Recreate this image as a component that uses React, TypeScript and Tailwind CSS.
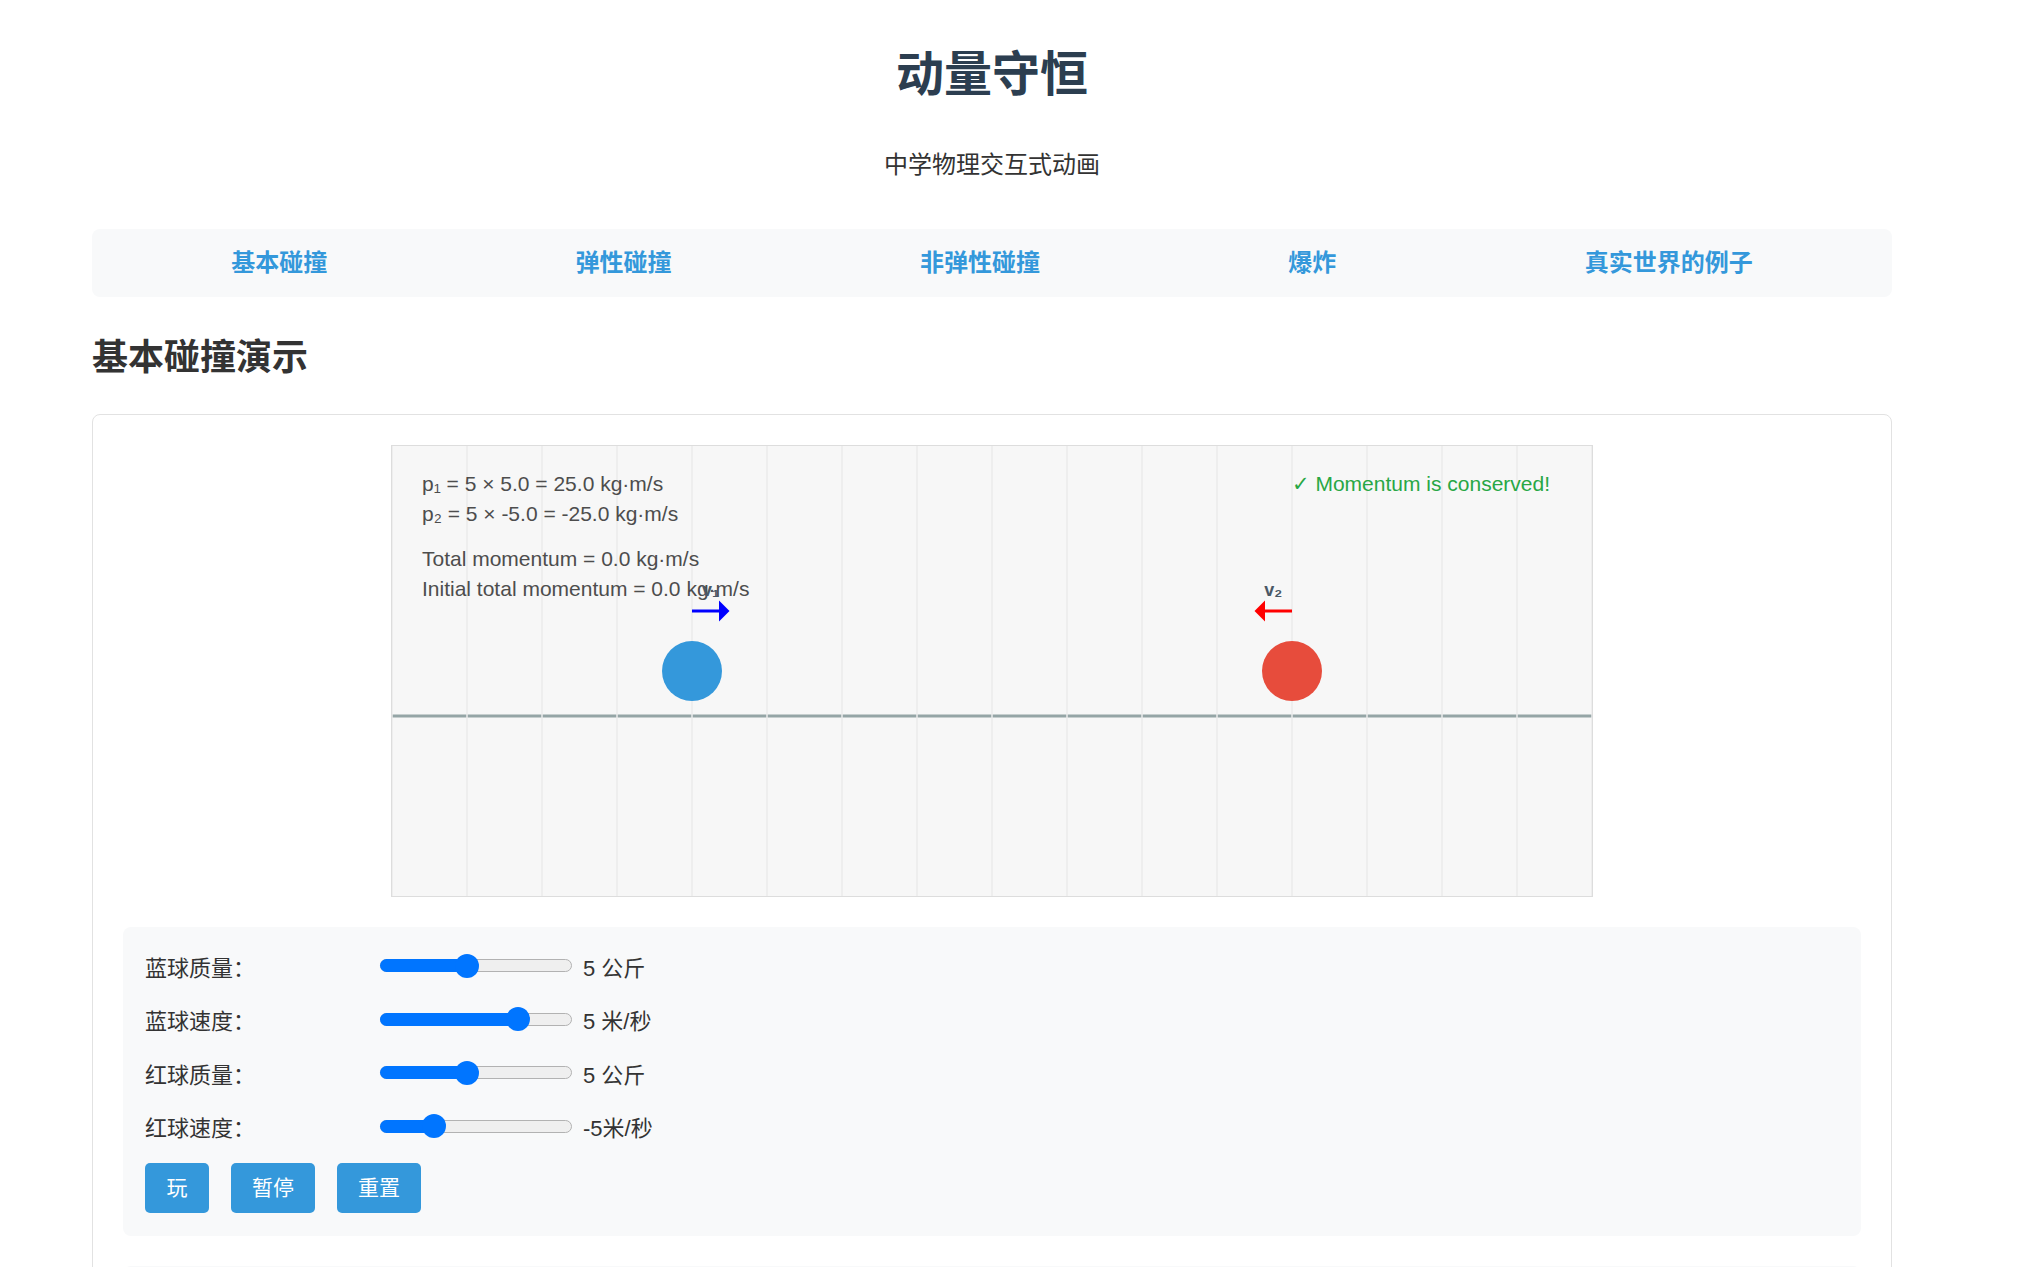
import React from 'react';

const navItems = ['基本碰撞', '弹性碰撞', '非弹性碰撞', '爆炸', '真实世界的例子'];

const controls = [
  { label: '蓝球质量：', frac: 4 / 9, value: '5 公斤' },
  { label: '蓝球速度：', frac: 0.75, value: '5 米/秒' },
  { label: '红球质量：', frac: 4 / 9, value: '5 公斤' },
  { label: '红球速度：', frac: 0.25, value: '-5米/秒' },
];

const Slider: React.FC<{ frac: number }> = ({ frac }) => {
  // thumb travels between 12px and 180px of the 192px track
  const c = 12 + frac * 168;
  return (
    <div className="relative w-[192px] h-[24px] mb-[5px] shrink-0">
      <div className="absolute left-0 right-0 top-[5.5px] h-[13px] rounded-full border border-[#b2b2b2] bg-[#efefef]" />
      <div className="absolute left-0 top-[5.5px] h-[13px] rounded-full bg-[#0075ff]" style={{ width: c }} />
      <div className="absolute top-0 w-[24px] h-[24px] rounded-full bg-[#0075ff]" style={{ left: c - 12 }} />
    </div>
  );
};

const Arrow: React.FC<{ x: number; dir: 1 | -1; color: string; label: string }> = ({ x, dir, color, label }) => {
  const end = x + dir * 25;
  return (
    <g>
      <line x1={x} y1={110} x2={end - dir * 4} y2={110} stroke={color} strokeWidth={2} />
      <polygon points={`${end},110 ${end - dir * 7},103 ${end - dir * 7},117`} fill={color} />
      <text x={x + dir * 12.5} y={100} textAnchor="middle" fontSize={12} fontWeight="bold" fill="#4a5866">
        {label}
      </text>
    </g>
  );
};

const Scene: React.FC = () => {
  const grid = Array.from({ length: 17 }, (_, i) => i * 50);
  return (
    <svg
      viewBox="0 0 800 300"
      className="block mx-auto w-[1202px] h-[452px] border border-[#dddddd] bg-[#f7f7f7]"
      fontFamily="'Liberation Sans', Arial, 'DejaVu Sans', sans-serif"
    >
      <line x1={0} y1={180} x2={800} y2={180} stroke="#95a5a6" strokeWidth={2} />
      {grid.map((x) => (
        <line key={x} x1={x} y1={0} x2={x} y2={300} stroke="#ebebeb" strokeWidth={1} />
      ))}

      <circle cx={200} cy={150} r={20} fill="#3498db" />
      <circle cx={600} cy={150} r={20} fill="#e74c3c" />

      <g fontSize={14} fill="#4d4d4d">
        <text x={20} y={30}>p₁ = 5 × 5.0 = 25.0 kg·m/s</text>
        <text x={20} y={50}>p₂ = 5 × -5.0 = -25.0 kg·m/s</text>
        <text x={20} y={80}>Total momentum = 0.0 kg·m/s</text>
        <text x={20} y={100}>Initial total momentum = 0.0 kg·m/s</text>
      </g>
      <text x={600} y={30} fontSize={14} fill="#28a745">✓ Momentum is conserved!</text>

      <Arrow x={200} dir={1} color="#0000ff" label="v₁" />
      <Arrow x={600} dir={-1} color="#ff0000" label="v₂" />
    </svg>
  );
};

const App: React.FC = () => {
  return (
    <div className="h-[1267px] overflow-hidden bg-white font-['Liberation_Sans','Noto_Sans_CJK_SC',sans-serif] text-[#333333]">
      <div className="ml-[92px] w-[1800px]">
        <h1 className="pt-[46px] text-center text-[48px] leading-[58px] font-bold text-[#2c3e50]">动量守恒</h1>
        <p className="mt-[43px] text-center text-[24px] leading-[36px] text-[#333333]">中学物理交互式动画</p>

        <nav className="mt-[46px] flex justify-around px-[15px] py-[15px] rounded-[8px] bg-[#f8f9fa]">
          {navItems.map((item) => (
            <a key={item} href="#" className="text-[24px] leading-[38px] font-bold text-[#3498db]">
              {item}
            </a>
          ))}
        </nav>

        <h2 className="mt-[39px] text-[36px] leading-[44px] font-bold text-[#333333]">基本碰撞演示</h2>

        <div className="mt-[34px] rounded-[8px] border border-[#e2e2e2] p-[30px]">
          <Scene />

          {/* Controls */}
          <div className="mt-[30px] rounded-[8px] bg-[#f8f9fa] px-[22px] pt-[22px] pb-[23px]">
            {controls.map((c) => (
              <div key={c.label} className="flex items-center h-[38px] mb-[15.5px]">
                <span className="w-[235px] text-[22px]">{c.label}</span>
                <Slider frac={c.frac} />
                <span className="ml-[11px] text-[22px]">{c.value}</span>
              </div>
            ))}
            <div className="mt-[3px] flex gap-[22px]">
              <button className="w-[64px] h-[50px] rounded-[5px] bg-[#3498db] text-white text-[21px]">玩</button>
              <button className="w-[84px] h-[50px] rounded-[5px] bg-[#3498db] text-white text-[21px]">暂停</button>
              <button className="w-[84px] h-[50px] rounded-[5px] bg-[#3498db] text-white text-[21px]">重置</button>
            </div>
          </div>

          <div className="mt-[30px] h-[200px] rounded-[8px] bg-[#f8f9fa]" />
        </div>
      </div>
    </div>
  );
};

export default App;
